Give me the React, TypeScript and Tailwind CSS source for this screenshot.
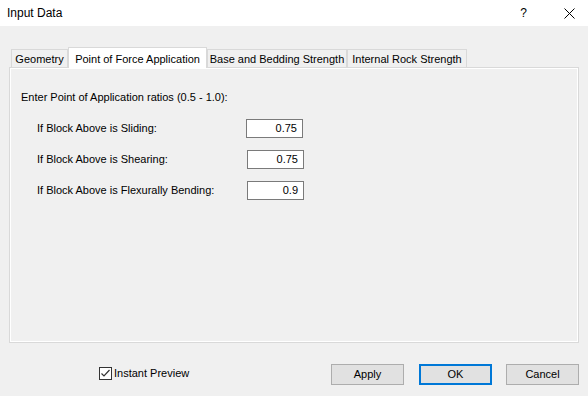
import React from "react";

const font = { fontFamily: '"Liberation Sans", Arial, sans-serif' };

function Tab({ label, active, w }: { label: string; active?: boolean; w: string }) {
  if (active) {
    return (
      <div
        className={`${w} h-[21px] -mb-px z-10 bg-white border border-b-0 border-[#d9d9d9] flex items-start justify-center pt-[3px] text-[11px] text-black whitespace-nowrap`}
      >
        {label}
      </div>
    );
  }
  return (
    <div
      className={`${w} h-[18px] bg-[#f0f0f0] border border-b-0 border-[#d9d9d9] flex items-center justify-center pt-px text-[11px] text-black whitespace-nowrap`}
    >
      {label}
    </div>
  );
}

function Row({ label, value, shift }: { label: string; value: string; shift?: boolean }) {
  return (
    <div className="flex items-center h-[19px]">
      <div className="w-[225px] pl-[16px] text-[11px] text-black leading-none whitespace-nowrap">{label}</div>
      <div
        className={`${shift ? "ml-px" : ""} w-[57px] h-[19px] bg-white border border-[#7a7a7a] flex items-center justify-end pr-[5px] text-[11px] text-black`}
      >
        {value}
      </div>
    </div>
  );
}

function Btn({ label, primary }: { label: string; primary?: boolean }) {
  return (
    <div
      className={`w-[73px] h-[21px] bg-[#e1e1e1] flex items-center justify-center text-[11px] text-black ${
        primary ? "border-2 border-[#0078d7]" : "border border-[#adadad]"
      }`}
    >
      {label}
    </div>
  );
}

export default function App() {
  return (
    <div className="w-[588px] h-[396px] bg-[#f0f0f0] flex flex-col overflow-hidden" style={font}>
      {/* Title bar */}
      <div className="h-[26px] bg-white flex items-center pl-[7px] shrink-0">
        <div className="text-[12px] text-black">Input Data</div>
        <div className="ml-auto mr-[37px] text-[12px] text-black">?</div>
        <svg width="11" height="11" viewBox="0 0 11 11" className="mr-[13px]">
          <path d="M0.5 0.5 L10.5 10.5 M10.5 0.5 L0.5 10.5" stroke="#000" strokeWidth="1" />
        </svg>
      </div>

      {/* Tabs */}
      <div className="mt-[21px] flex items-end pl-[11px] h-[20px]">
        <Tab label="Geometry" w="w-[57px]" />
        <Tab label="Point of Force Application" active w="w-[139px]" />
        <Tab label="Base and Bedding Strength" w="w-[140px]" />
        <Tab label="Internal Rock Strength" w="w-[120px]" />
      </div>

      {/* Panel */}
      <div className="ml-[9px] w-[570px] h-[276px] border border-[#d9d9d9]">
        <div className="w-full h-full border border-white pl-[10px] pt-[21px]">
          <div className="text-[11px] text-black leading-[15px] whitespace-nowrap">
            Enter Point of Application ratios (0.5 - 1.0):
          </div>
          <div className="mt-[14px] flex flex-col gap-[12px]">
            <Row label="If Block Above is Sliding:" value="0.75" />
            <Row label="If Block Above is Shearing:" value="0.75" shift />
            <Row label="If Block Above is Flexurally Bending:" value="0.9" shift />
          </div>
        </div>
      </div>

      {/* Bottom */}
      <div className="mt-[21px] flex items-start pl-[99px] pr-[9px]">
        <div className="flex items-center mt-px">
          <div className="w-[13px] h-[13px] bg-white border border-[#333] flex items-center justify-center">
            <svg width="11" height="11" viewBox="0 0 11 11">
              <path d="M1.5 5.5 L4 8 L9.5 2" stroke="#333" strokeWidth="1.2" fill="none" />
            </svg>
          </div>
          <div className="ml-[2px] text-[11px] text-black">Instant Preview</div>
        </div>
        <div className="ml-auto flex">
          <div className="mr-[15px]">
            <Btn label="Apply" />
          </div>
          <div className="mr-[14px]">
            <Btn label="OK" primary />
          </div>
          <Btn label="Cancel" />
        </div>
      </div>
    </div>
  );
}
